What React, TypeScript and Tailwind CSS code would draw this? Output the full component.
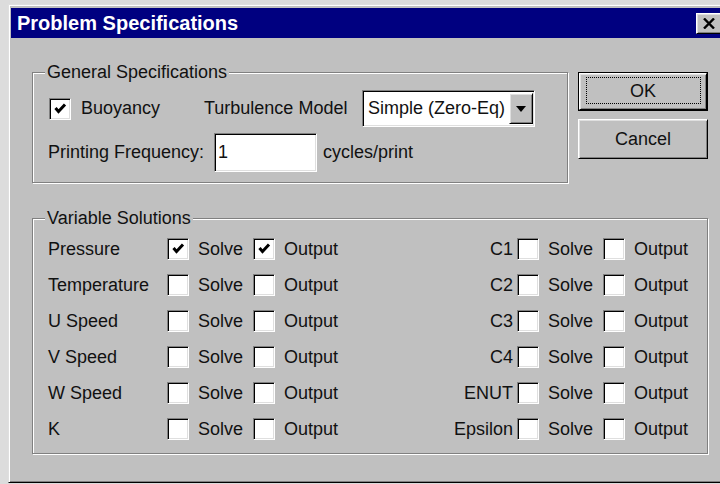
import React from 'react';

// Classic 3D bevels, written out so Tailwind picks them up
const raised =
  'border border-t-white border-l-white border-r-black border-b-black bg-[#c0c0c0] shadow-[inset_1px_1px_0_#dfdfdf,inset_-1px_-1px_0_#808080]';
const sunken =
  'border border-t-[#808080] border-l-[#808080] border-r-white border-b-white bg-white shadow-[inset_1px_1px_0_#000,inset_-1px_-1px_0_#dfdfdf]';

function CheckBox({ checked = false }: { checked?: boolean }) {
  return (
    <span className={`flex h-[22px] w-[22px] shrink-0 items-center justify-center ${sunken}`}>
      {checked && (
        <svg width="14" height="14" viewBox="0 0 14 14">
          <path d="M2.5 6 L5.5 9.5 L12 2.5" fill="none" stroke="#000" strokeWidth="3" />
        </svg>
      )}
    </span>
  );
}

function GroupBox({ title, className = '', children }: { title: string; className?: string; children: React.ReactNode }) {
  return (
    <div className={`relative border border-[#808080] shadow-[1px_1px_0_#fff,inset_1px_1px_0_#fff] ${className}`}>
      <span className="absolute left-[12px] top-[-12px] bg-[#c0c0c0] px-[2px] leading-[22px]">{title}</span>
      {children}
    </div>
  );
}

type Variable = { name: string; solve?: boolean; output?: boolean };

const leftVars: Variable[] = [
  { name: 'Pressure', solve: true, output: true },
  { name: 'Temperature' },
  { name: 'U Speed' },
  { name: 'V Speed' },
  { name: 'W Speed' },
  { name: 'K' },
];

const rightVars: Variable[] = [
  { name: 'C1' },
  { name: 'C2' },
  { name: 'C3' },
  { name: 'C4' },
  { name: 'ENUT' },
  { name: 'Epsilon' },
];

function VariableRow({ v, align }: { v: Variable; align: 'left' | 'right' }) {
  return (
    <div className="flex h-[36px] items-center">
      {align === 'left' ? (
        <span className="w-[119px]">{v.name}</span>
      ) : (
        <span className="mr-[4px] w-[80px] text-right">{v.name}</span>
      )}
      <CheckBox checked={v.solve} />
      <span className="w-[64px] pl-[9px]">Solve</span>
      <CheckBox checked={v.output} />
      <span className="pl-[9px]">Output</span>
    </div>
  );
}

export default function App() {
  return (
    <div className="h-[484px] w-[720px] overflow-hidden bg-[#dcdcdc] pl-[8px] pt-[4px] font-['Liberation_Sans',Arial,sans-serif] text-[18px] text-[#111]">
      <div className="flex h-[479px] w-[720px] flex-col border border-t-[#dfdfdf] border-l-[#dfdfdf] border-r-black border-b-black bg-[#c0c0c0] px-[2px] pt-[3px] shadow-[inset_1px_1px_0_#fff,inset_-1px_-1px_0_#808080]">
        {/* title bar */}
        <div className="flex h-[30px] items-center bg-[#000080] pl-[6px] pr-[3px]">
          <span className="flex-1 text-[20px] font-bold text-white">Problem Specifications</span>
          <button className={`flex h-[21px] w-[26px] items-center justify-center ${raised}`}>
            <svg width="12" height="11" viewBox="0 0 12 11">
              <path d="M1 0.5 L11 10.5 M11 0.5 L1 10.5" stroke="#000" strokeWidth="2.4" />
            </svg>
          </button>
        </div>

        <div className="pl-[21px] pt-[34px]">
          <div className="flex">
            <GroupBox title="General Specifications" className="w-[536px] pb-[10px] pl-[16px] pt-[17px]">
              <div className="flex h-[37px] items-center">
                <div className="flex w-[155px] items-center">
                  <CheckBox checked />
                  <span className="ml-[10px]">Buoyancy</span>
                </div>
                <span className="w-[158px]">Turbulence Model</span>
                <div className={`flex h-[37px] w-[173px] items-center ${sunken}`}>
                  <span className="flex-1 pl-[5px]">Simple (Zero-Eq)</span>
                  <span className={`mr-[1px] flex h-[31px] w-[24px] items-center justify-center ${raised}`}>
                    <svg width="10" height="6" viewBox="0 0 10 6">
                      <path d="M0 0 H10 L5 6 Z" fill="#000" />
                    </svg>
                  </span>
                </div>
              </div>
              <div className="mt-[6px] flex h-[39px] items-center">
                <span className="-ml-[1px] w-[166px]">Printing Frequency:</span>
                <div className={`flex h-[39px] w-[103px] items-center pl-[3px] ${sunken}`}>1</div>
                <span className="ml-[6px]">cycles/print</span>
              </div>
            </GroupBox>

            <div className="ml-[10px] flex w-[130px] flex-col">
              <div className="h-[39px] border border-black">
                <button className={`relative flex h-full w-full items-center justify-center ${raised}`}>
                  <span className="absolute bottom-[5px] left-[6px] right-[5px] top-[3px] border border-dotted border-black" />
                  OK
                </button>
              </div>
              <button className={`mt-[8px] flex h-[40px] w-full items-center justify-center ${raised}`}>Cancel</button>
            </div>
          </div>

          <GroupBox title="Variable Solutions" className="mt-[35px] flex w-[676px] pb-[6px] pl-[15px] pt-[12px]">
            <div className="w-[385px]">
              {leftVars.map((v) => (
                <VariableRow key={v.name} v={v} align="left" />
              ))}
            </div>
            <div>
              {rightVars.map((v) => (
                <VariableRow key={v.name} v={v} align="right" />
              ))}
            </div>
          </GroupBox>
        </div>
      </div>
    </div>
  );
}
